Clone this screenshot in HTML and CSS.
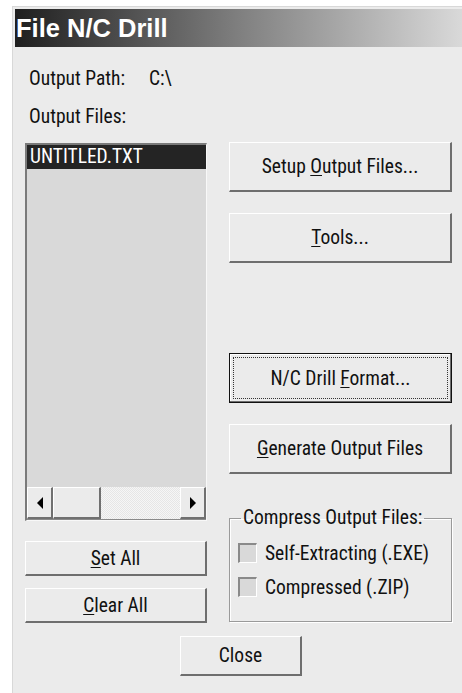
FILE: index.html
```html
<!DOCTYPE html>
<html>
<head>
<meta charset="utf-8">
<title>File N/C Drill</title>
<link rel="stylesheet" href="styles.css">
</head>
<body>
<div class="window">
  <div class="titlebar">File N/C Drill</div>
  <div class="body">
    <div class="path-row"><span class="path-label">Output Path:</span><span class="path-value">C:\</span></div>
    <div class="files-label">Output Files:</div>
    <div class="main">
      <div class="left">
        <div class="listbox">
          <div class="list-items">
            <div class="item selected">UNTITLED.TXT</div>
          </div>
          <div class="hscroll">
            <div class="sb-btn sb-left">
              <svg width="8" height="12" viewBox="0 0 8 12"><polygon points="7,0 7,12 1,6" fill="#000"/></svg>
            </div>
            <div class="sb-thumb"></div>
            <div class="sb-track"></div>
            <div class="sb-btn sb-right">
              <svg width="8" height="12" viewBox="0 0 8 12"><polygon points="1,0 1,12 7,6" fill="#000"/></svg>
            </div>
          </div>
        </div>
        <button class="btn btn-small btn-set"><u>S</u>et All</button>
        <button class="btn btn-small btn-clear"><u>C</u>lear All</button>
      </div>
      <div class="right">
        <button class="btn btn-big">Setup <u>O</u>utput Files...</button>
        <button class="btn btn-big btn-tools"><u>T</u>ools...</button>
        <button class="btn btn-big btn-default">N/C Drill <u>F</u>ormat...</button>
        <button class="btn btn-big btn-generate"><u>G</u>enerate Output Files</button>
        <fieldset class="group">
          <legend>Compress Output Files:</legend>
          <label class="check"><span class="check-box"></span>Self-Extracting (.EXE)</label>
          <label class="check"><span class="check-box"></span>Compressed (.ZIP)</label>
        </fieldset>
      </div>
    </div>
    <div class="close-row"><button class="btn btn-close">Close</button></div>
  </div>
</div>
</body>
</html>
```
FILE: styles.css
```css
html, body {
  margin: 0;
  padding: 0;
  background: #ffffff;
}

body {
  font-family: Roboto, "Liberation Sans", sans-serif;
  font-stretch: 75%;
  font-size: 19.5px;
  color: #111;
  overflow: hidden;
}

.window {
  margin: 6px 0 0 12px;
  height: 700px;
  border-top: 1px solid #d8d8d8;
  border-left: 1px solid #d8d8d8;
  background: #ebebeb;
  padding: 2px 0 0 2px;
}

.titlebar {
  height: 38px;
  line-height: 39px;
  padding-left: 1px;
  background: linear-gradient(to right, #1f1f1f 0%, #7f7f7f 50%, #d9d9d9 100%);
  color: #fff;
  font-family: "Liberation Sans", Arial, sans-serif;
  font-stretch: normal;
  font-weight: bold;
  font-size: 25.5px;
  white-space: nowrap;
}

.body {
  padding: 20px 0 0 10px;
}

.path-row {
  display: grid;
  grid-template-columns: 124px auto;
}

.path-row,
.files-label {
  line-height: 24px;
  height: 24px;
}

.path-label,
.files-label {
  padding-left: 4px;
}

.files-label {
  margin-top: 14px;
}

.main {
  display: flex;
  gap: 22px;
  margin-top: 13px;
}

.left {
  width: 182px;
  display: flex;
  flex-direction: column;
}

.right {
  width: 223px;
  display: flex;
  flex-direction: column;
}

/* list box with its horizontal scroll bar */
.listbox {
  margin-top: 1px;
  height: 378px;
  box-sizing: border-box;
  border-top: 2px solid #7a7a7a;
  border-left: 2px solid #7a7a7a;
  border-right: 1px solid #f8f8f8;
  border-bottom: 1px solid #f8f8f8;
  background: #d9d9d9;
  display: flex;
  flex-direction: column;
}

.list-items {
  flex: 1;
}

.item {
  height: 24px;
  line-height: 24px;
  padding-left: 3px;
  white-space: nowrap;
}

.item.selected {
  background: #242424;
  color: #fff;
}

.hscroll {
  height: 32px;
  display: flex;
  border-bottom: 1px solid #8a8a8a;
}

.sb-btn,
.sb-thumb {
  box-sizing: border-box;
  background: #ebebeb;
  border-top: 1px solid #ffffff;
  border-left: 1px solid #ffffff;
  border-right: 2px solid #707070;
  border-bottom: 2px solid #707070;
  display: flex;
  align-items: center;
  justify-content: center;
}

.sb-left { width: 26px; }
.sb-right { width: 26px; }
.sb-thumb { width: 48px; }

.sb-track {
  flex: 1;
  background: repeating-conic-gradient(#f6f6f6 0% 25%, #e6e6e6 0% 50%) 0 0 / 2px 2px;
}

/* push buttons */
.btn {
  font: inherit;
  color: #111;
  margin: 0;
  padding: 0;
  box-sizing: border-box;
  background: #ebebeb;
  border-top: 1px solid #ffffff;
  border-left: 1px solid #ffffff;
  border-right: 2px solid #6e6e6e;
  border-bottom: 2px solid #6e6e6e;
  border-radius: 0;
  text-align: center;
}

.btn u {
  text-underline-offset: 2px;
}

.btn-big {
  height: 50px;
}

.btn-tools { margin-top: 21px; }
.btn-default { margin-top: 90px; }
.btn-generate { margin-top: 21px; }

.btn-default {
  border: 1px solid #111;
  box-shadow: inset -1px -1px 0 #6e6e6e, inset 1px 1px 0 #fff;
  outline: 1px dotted #333;
  outline-offset: -5px;
}

.btn-small {
  height: 35px;
}

.btn-set { margin-top: 20px; }
.btn-clear { margin-top: 12px; }

/* compression options */
.group {
  margin: 32px 0 0 0;
  padding: 0 0 0 8px;
  height: 116px;
  box-sizing: border-box;
  border: 1px solid #9a9a9a;
  box-shadow: 1px 1px 0 #fff, inset 1px 1px 0 #fff;
}

.group legend {
  padding: 0 2px;
  margin-left: 3px;
  line-height: 24px;
}

.check {
  display: flex;
  align-items: center;
  gap: 8px;
  height: 34px;
  white-space: nowrap;
}

.check:first-of-type {
  margin-top: 6px;
}

.check-box {
  width: 19px;
  height: 20px;
  box-sizing: border-box;
  background: #d9d9d9;
  border-top: 2px solid #8a8a8a;
  border-left: 2px solid #8a8a8a;
  border-right: 1px solid #fff;
  border-bottom: 1px solid #fff;
}

.close-row {
  margin-top: 13px;
  padding-left: 155px;
}

.btn-close {
  width: 122px;
  height: 40px;
}
```
